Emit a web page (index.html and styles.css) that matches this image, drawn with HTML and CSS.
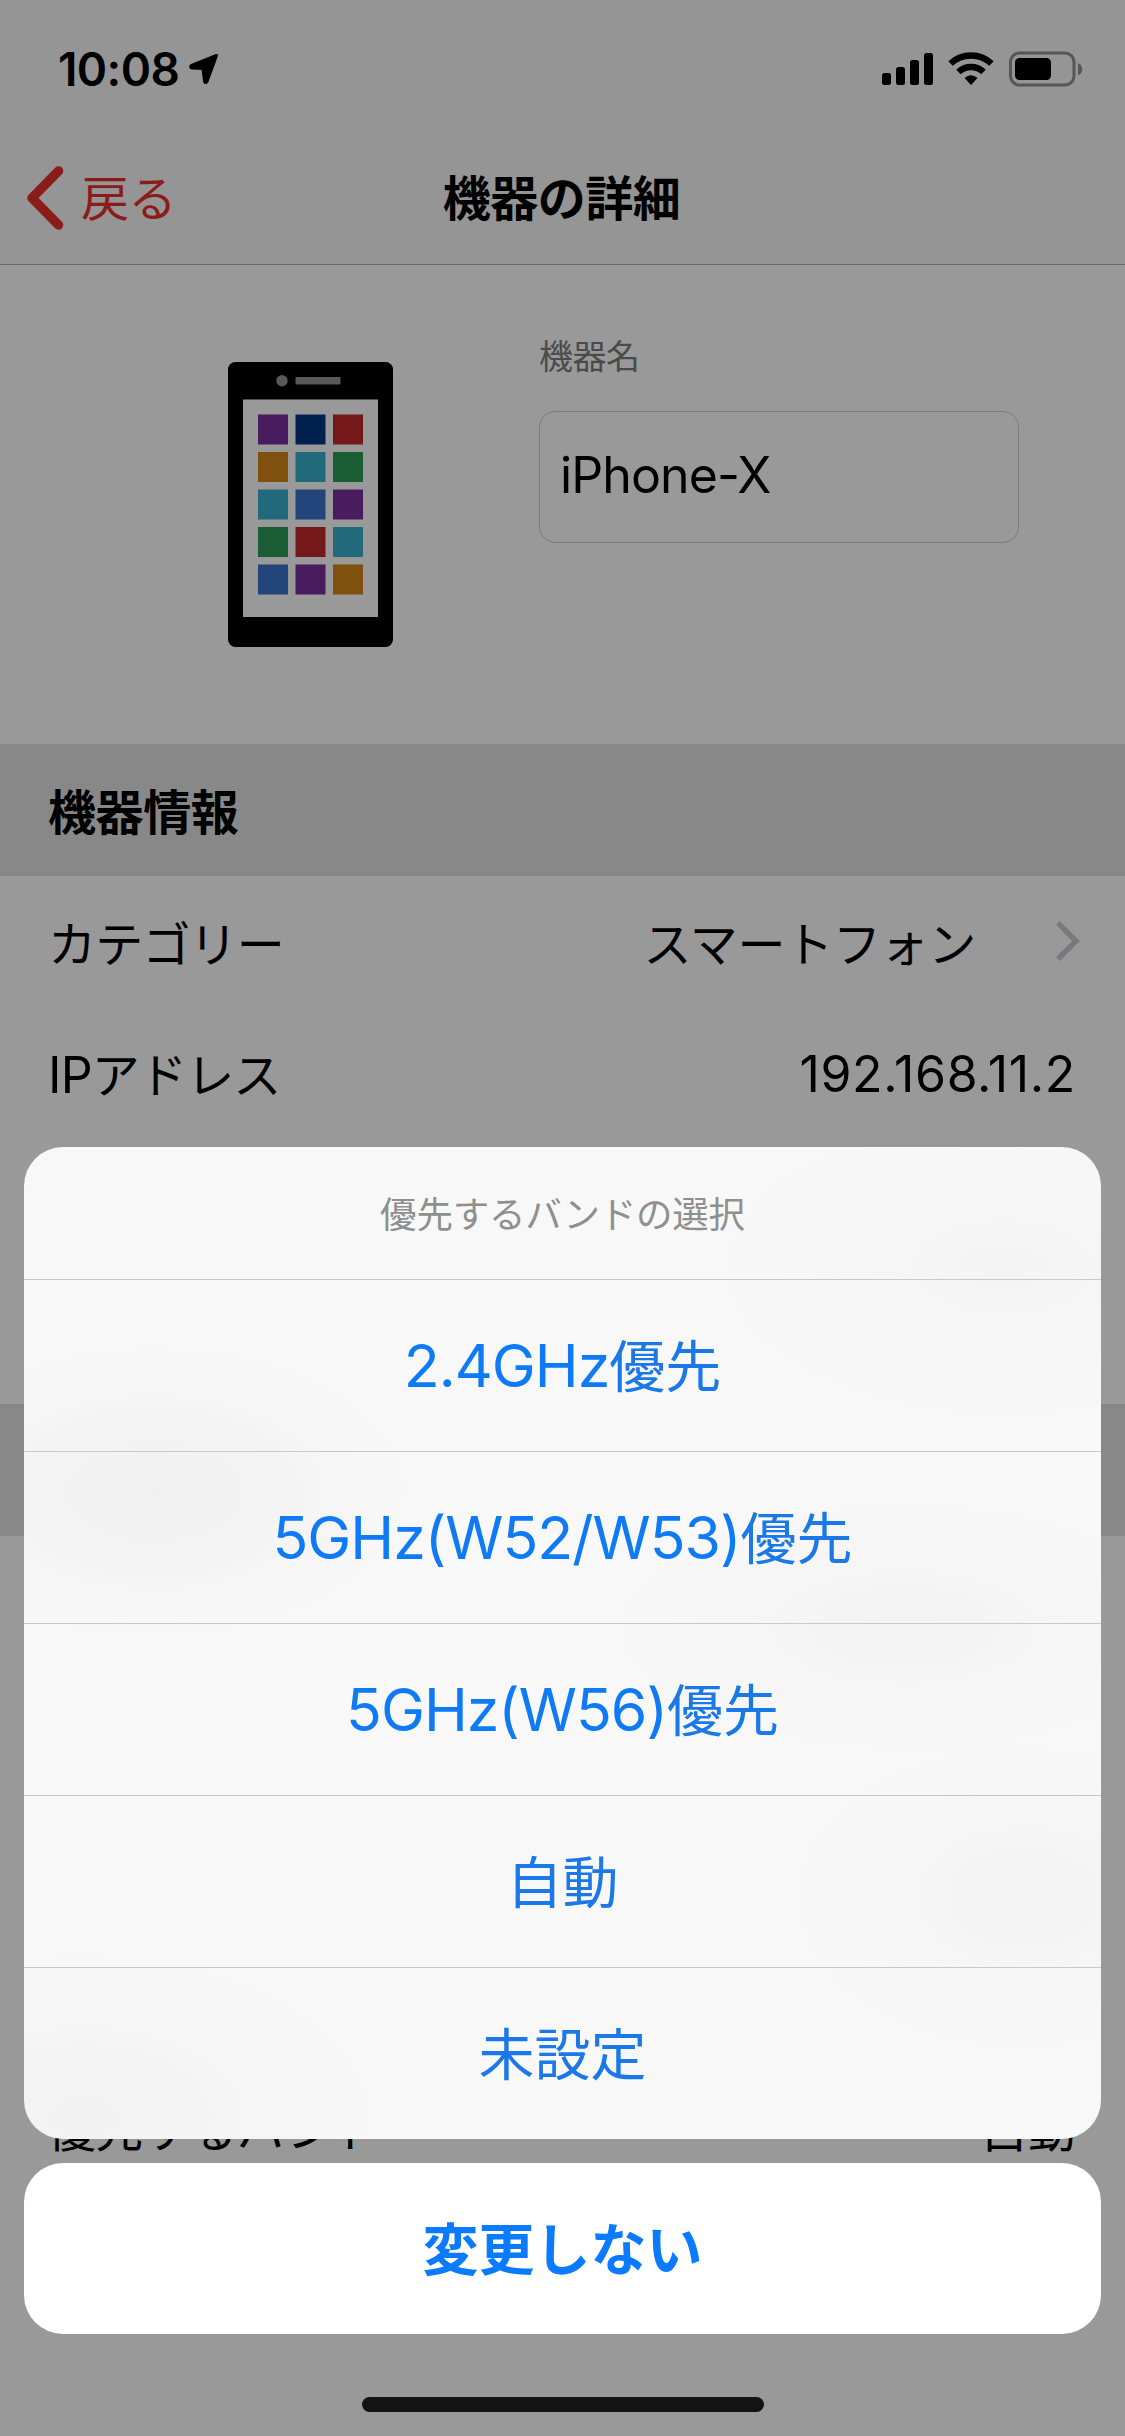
FILE: index.html
```html
<!DOCTYPE html>
<html lang="ja">
<head>
<meta charset="utf-8">
<title>機器の詳細</title>
<link rel="stylesheet" href="styles.css">
</head>
<body>
<div class="screen">
  <header class="top">
    <div class="status">
      <div class="clock"><span class="time">10:08</span>
        <svg class="arrow" width="30" height="31" viewBox="0 0 30 31"><path d="M27.500 2.500 2.500 12.500Q.5 14 3 15L14 15.500 15.500 28Q16.300 31 18 28.500Z" fill="#000" stroke="#000" stroke-width="3" stroke-linejoin="round"/></svg>
      </div>
      <svg class="indicators" width="202" height="36" viewBox="0 0 202 36">
        <rect x="0" y="22" width="9" height="12" rx="2.500"/>
        <rect x="14" y="16" width="9" height="18" rx="2.500"/>
        <rect x="28" y="9" width="9" height="25" rx="2.500"/>
        <rect x="42" y="2" width="9" height="32" rx="2.500"/>
        <path d="M68.500 12.500A30 30 0 0 1 109.500 12.500" fill="none" stroke="#000" stroke-width="6.500"/>
        <path d="M76.500 21A18 18 0 0 1 101.500 21" fill="none" stroke="#000" stroke-width="6.500"/>
        <path d="M82.500 27Q89 21.500 95.500 27L89 34Z"/>
        <rect x="128.500" y="2" width="63.500" height="32" rx="9" fill="none" stroke="#575757" stroke-width="3"/>
        <rect x="133" y="7" width="36" height="22" rx="4.500"/>
        <path d="M196 12Q200.300 14 200.300 18T196 24.500Z" fill="#575757"/>
      </svg>
    </div>
    <nav class="nav">
      <a class="back">
        <svg width="38" height="66" viewBox="0 0 38 66"><path d="M32.500 6 6 33 32.500 60" fill="none" stroke="#8a1c1a" stroke-width="9.500" stroke-linecap="round" stroke-linejoin="round"/></svg>
        <span>戻る</span>
      </a>
      <h1 class="title">機器の詳細</h1>
    </nav>
  </header>

  <section class="device">
    <svg class="phone" width="165" height="285" viewBox="0 0 22 38">
      <rect width="22" height="38" rx="1"/>
      <circle cx="7.200" cy="2.500" r=".76" fill="#595959"/>
      <rect x="9" y="2" width="6" height="1" fill="#595959"/>
      <rect x="2" y="5" width="18" height="29" fill="#999"/>
      <g fill="#481c5e"><path d="M4 7h4v4H4zM14 17h4v4h-4zM9 27h4v4H9z"/></g>
      <path d="M9 7h4v4H9z" fill="#00204e"/>
      <g fill="#741819"><path d="M14 7h4v4h-4zM9 22h4v4H9z"/></g>
      <g fill="#80500f"><path d="M4 12h4v4H4zM14 27h4v4h-4z"/></g>
      <g fill="#216a7c"><path d="M9 12h4v4H9zM4 17h4v4H4zM14 22h4v4h-4z"/></g>
      <g fill="#1a5c33"><path d="M14 12h4v4h-4zM4 22h4v4H4z"/></g>
      <g fill="#22457c"><path d="M9 17h4v4H9zM4 27h4v4H4z"/></g>
    </svg>
    <div class="field">
      <div class="field-label">機器名</div>
      <div class="field-input">iPhone-X</div>
    </div>
  </section>

  <h2 class="section">機器情報</h2>
  <div class="row">
    <span class="kana">カテゴリー</span>
    <span class="value link">スマートフォン
      <svg width="25" height="42" viewBox="0 0 25 42"><path d="M3 3 21 21 3 39" fill="none" stroke="#7a7a7c" stroke-width="5.500"/></svg>
    </span>
  </div>
  <div class="row address"><span class="kana"><span class="lat ip">IP</span>アドレス</span><span class="value lat addr">192.168.11.2</span></div>
  <div class="row"></div>
  <div class="row"></div>
  <div class="section"></div>
  <div class="row"></div>
  <div class="row"></div>
  <div class="row"></div>
  <div class="row"></div>
  <div class="row band"><span class="kana">優先するバンド</span><span class="value">自動</span></div>

  <div class="overlay">
    <div class="sheet">
      <div class="sheet-title">優先するバンドの選択</div>
      <div class="option"><span class="lat">2.4GHz</span>優先</div>
      <div class="option"><span class="lat">5GHz(W52/W53)</span>優先</div>
      <div class="option"><span class="lat">5GHz(W56)</span>優先</div>
      <div class="option">自動</div>
      <div class="option">未設定</div>
    </div>
    <div class="cancel">変更しない</div>
    <div class="home"></div>
  </div>
</div>
</body>
</html>
```
FILE: styles.css
```css
* { box-sizing: border-box; margin: 0; }

body { background: #999; }

.screen {
  position: relative;
  width: 1125px;
  height: 2436px;
  overflow: hidden;
  background: #999;
  color: #000;
  font: 400 48px/1 "Noto Sans CJK JP", sans-serif;
  white-space: nowrap;
}

.lat { font-family: Inter, sans-serif; }

.top {
  height: 265px;
  background: #959595;
  border-bottom: 1px solid #6a6a6a;
}

.status {
  display: flex;
  justify-content: space-between;
  height: 132px;
  padding: 51px 41px 0 58px;
}

.clock { display: flex; align-items: flex-start; gap: 10px; height: 36px; }
.time { font: 600 46px/36px Inter, sans-serif; letter-spacing: -0.6px; }
.arrow { margin-top: 2px; }

.nav {
  display: grid;
  grid-template-columns: 1fr auto 1fr;
  align-items: center;
  height: 132px;
  padding-left: 26px;
}

.back { display: flex; align-items: center; gap: 17px; color: #8a1c1a; }
.back span { padding-bottom: 6px; letter-spacing: -0.5px; }
.title { padding-bottom: 6px; margin-right: 28px; font-size: 48px; font-weight: 700; line-height: 1; letter-spacing: -0.5px; }

.device {
  display: flex;
  height: 479px;
  padding: 97px 106px 0 228px;
  justify-content: space-between;
}

.field { width: 480px; margin-top: -25px; }
.field-label { font-size: 34px; line-height: 36px; letter-spacing: -0.5px; color: #4a4a4a; }
.field-input {
  display: flex;
  align-items: center;
  height: 132px;
  margin-top: 38px;
  padding: 0 20px 4px;
  border: 1px solid #7b7b7b;
  border-radius: 16px;
  font: 400 50px/1 Inter, sans-serif;
  letter-spacing: -0.9px;
}

.section {
  display: flex;
  align-items: center;
  height: 132px;
  padding: 0 48px 3px;
  background: #888889;
  font-size: 48px;
  font-weight: 700;
  letter-spacing: -0.4px;
}

.row {
  display: flex;
  align-items: center;
  justify-content: space-between;
  height: 132px;
  padding: 0 49px 3px 48px;
}

.kana { letter-spacing: -0.8px; }
.address { padding-bottom: 0; }
.band { padding-bottom: 8px; }
.link { display: flex; align-items: center; gap: 79px; margin-right: -4px; letter-spacing: -0.3px; }
.ip, .addr { font-size: 50px; }
.addr { letter-spacing: 0.65px; }

.overlay {
  position: absolute;
  left: 24px;
  top: 1147px;
  width: 1077px;
}

.sheet {
  height: 992px;
  border-radius: 39px;
  overflow: hidden;
  background:
    radial-gradient(ellipse 260px 150px at 130px 345px, #f0f0f1, transparent),
    radial-gradient(ellipse 300px 130px at 880px 480px, #f3f3f3, transparent),
    radial-gradient(ellipse 240px 160px at 1000px 750px, #f3f3f3, transparent),
    radial-gradient(ellipse 300px 170px at 60px 970px, #f2f2f2, transparent),
    radial-gradient(ellipse 300px 160px at 980px 120px, #f4f4f4, transparent),
    #f8f8f8;
}

.sheet-title {
  display: flex;
  align-items: center;
  justify-content: center;
  height: 132px;
  color: #8f8f8f;
  font-size: 36.500px;
  letter-spacing: -0.2px;
}

.option, .cancel {
  display: flex;
  align-items: baseline;
  justify-content: center;
  height: 172px;
  line-height: 166px;
  color: #1a78e8;
  font-size: 56px;
}

.option { border-top: 1px solid #c9c9ca; }
.option .lat { font-size: 59px; letter-spacing: -1px; color: #0f7af5; }

.cancel {
  height: 171px;
  margin-top: 24px;
  border-radius: 39px;
  background: #fff;
  color: #0a7aff;
  font-weight: 700;
}

.home {
  width: 402px;
  height: 15px;
  margin: 63px auto 0;
  border-radius: 8px;
  background: #131313;
}
```
